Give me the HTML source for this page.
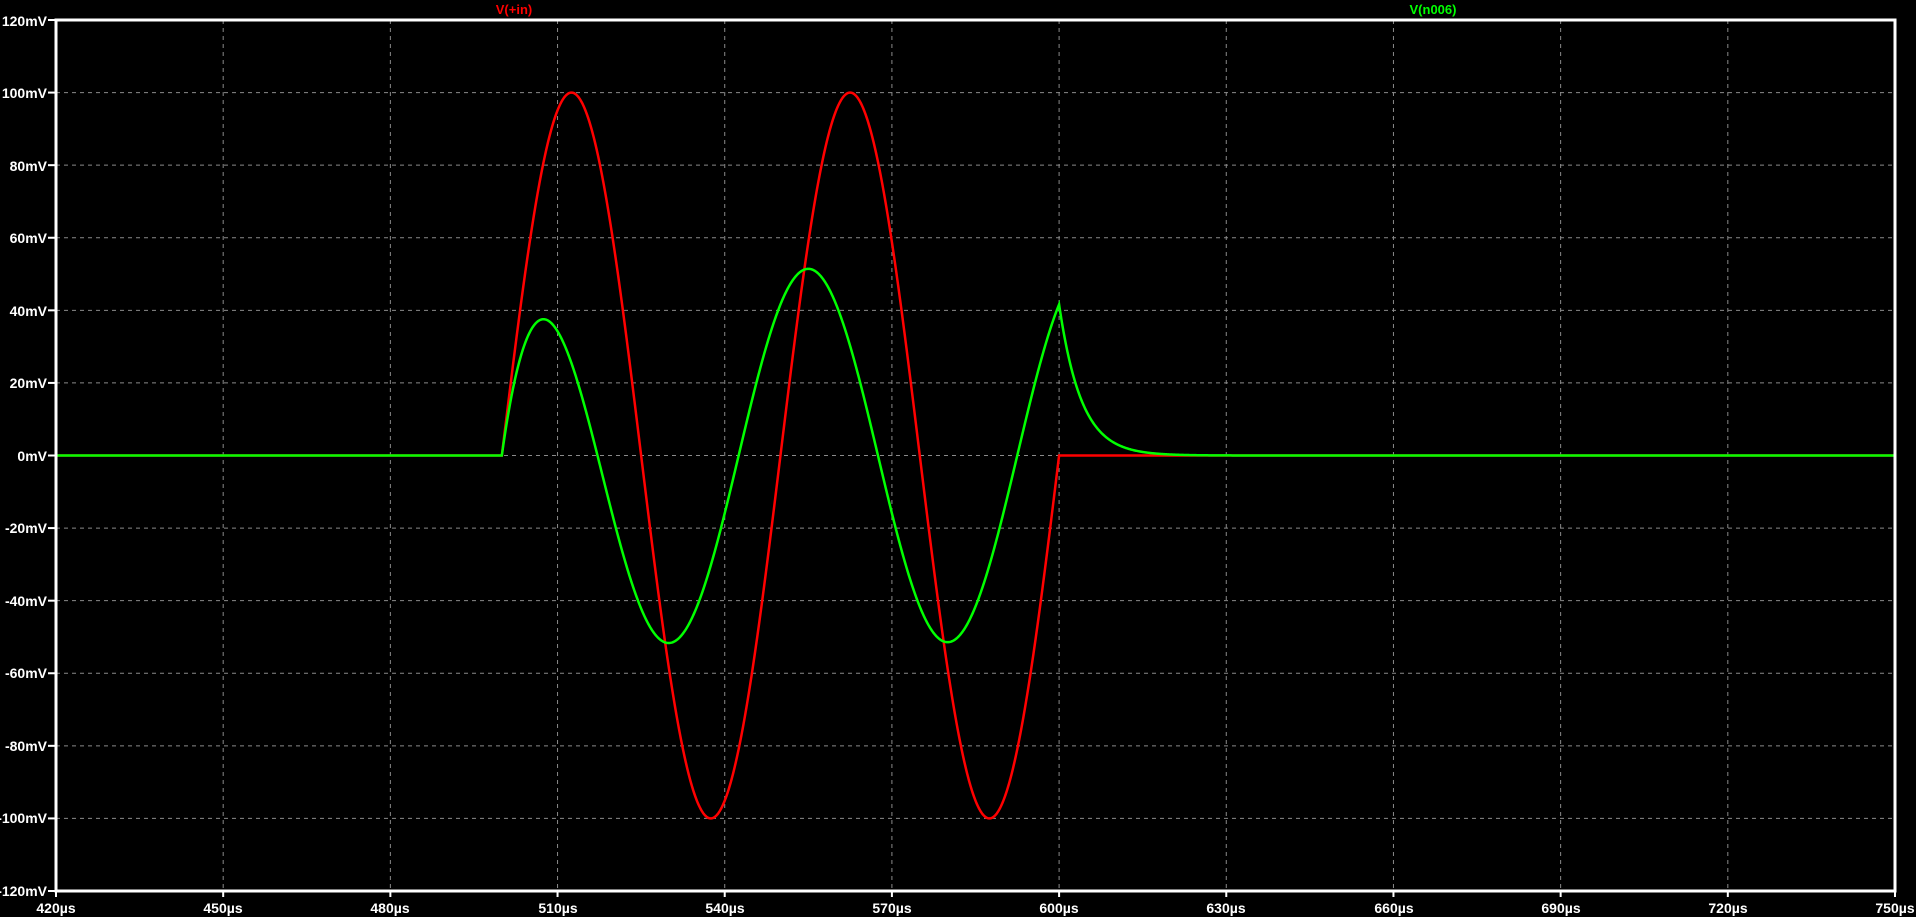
<!DOCTYPE html>
<html><head><meta charset="utf-8"><style>
html,body{margin:0;padding:0;background:#000;overflow:hidden}
svg{display:block}
text{font-family:"Liberation Sans",sans-serif;font-weight:bold;font-size:14px}
</style></head><body>
<svg id="s" width="1916" height="917" xmlns="http://www.w3.org/2000/svg">
<rect width="1916" height="917" fill="#000"/>
<g id="grid" stroke="#8a8a8a" stroke-width="1" stroke-dasharray="4,4"></g>
<g fill="#fff" text-anchor="end">
<text x="47" y="26">120mV</text>
<text x="47" y="98">100mV</text>
<text x="47" y="171">80mV</text>
<text x="47" y="243">60mV</text>
<text x="47" y="316">40mV</text>
<text x="47" y="388">20mV</text>
<text x="47" y="461">0mV</text>
<text x="47" y="533">-20mV</text>
<text x="47" y="606">-40mV</text>
<text x="47" y="678">-60mV</text>
<text x="47" y="751">-80mV</text>
<text x="47" y="823">-100mV</text>
<text x="47" y="896">-120mV</text>
</g>
<g fill="#fff" text-anchor="middle">
<text x="56" y="913">420µs</text>
<text x="223" y="913">450µs</text>
<text x="390" y="913">480µs</text>
<text x="558" y="913">510µs</text>
<text x="725" y="913">540µs</text>
<text x="892" y="913">570µs</text>
<text x="1059" y="913">600µs</text>
<text x="1226" y="913">630µs</text>
<text x="1394" y="913">660µs</text>
<text x="1561" y="913">690µs</text>
<text x="1728" y="913">720µs</text>
<text x="1895" y="913">750µs</text>
</g>
<text x="514" y="14" fill="#ff0000" text-anchor="middle" style="font-size:13px">V(+in)</text>
<text x="1433" y="14" fill="#00ff00" text-anchor="middle" style="font-size:13px">V(n006)</text>
<g id="ticks" stroke="#fff" stroke-width="2"></g>
<path id="red" fill="none" stroke="#ff0000" stroke-width="2.5"/>
<path id="green" fill="none" stroke="#00ff00" stroke-width="2.5"/>
<rect x="56" y="20" width="1839" height="871" fill="none" stroke="#fff" stroke-width="3"/>
</svg>
<script>
var L=56,R=1895,T=20,B=891;
function X(t){return L+(t-420)*(R-L)/330}
function Y(v){return T+(120-v)*(B-T)/240}
var g=document.getElementById('grid'),tk=document.getElementById('ticks'),ns='http://www.w3.org/2000/svg';
function ln(p,a,b,c,d){var e=document.createElementNS(ns,'line');e.setAttribute('x1',a);e.setAttribute('y1',b);e.setAttribute('x2',c);e.setAttribute('y2',d);p.appendChild(e)}
for(var i=1;i<11;i++){var x=X(420+30*i);ln(g,x,T,x,B)}
for(var i=1;i<12;i++){var y=Y(120-20*i);ln(g,L,y,R,y)}
for(var i=0;i<=11;i++){var x=X(420+30*i);ln(tk,x,B,x,B+6)}
for(var i=0;i<=12;i++){var y=Y(120-20*i);ln(tk,L-8,y,L,y)}
function red(t){return (t>500&&t<600)?100*Math.sin(2*Math.PI*(t-500)/50):0}
var dt=0.01,y=0,xp=0,rd='',gd='',k=0;
for(var t=420;t<=750;t+=dt){
 var xv=red(t);
 var tau=t<600?5.78:4.0;
 y=y+(xv-xp)-y*dt/tau; xp=xv;
 if(k%10==0){
  rd+=(rd?'L':'M')+X(t).toFixed(2)+' '+Y(xv).toFixed(2);
  gd+=(gd?'L':'M')+X(t).toFixed(2)+' '+Y(y*(t<600?0.875:0.875)).toFixed(2);
 }
 k++;
}
document.getElementById('red').setAttribute('d',rd);
document.getElementById('green').setAttribute('d',gd);
</script>
</body></html>
